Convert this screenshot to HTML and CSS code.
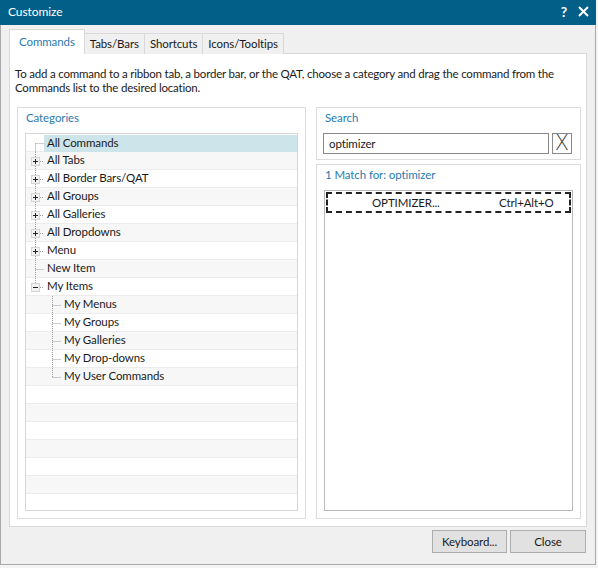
FILE: index.html
```html
<!DOCTYPE html>
<html lang="en">
<head>
  <meta charset="UTF-8" />
  <title>Customize</title>
  <link rel="stylesheet" href="styles.css">
</head>
<body>
  <svg class="defs" width="0" height="0">
    <symbol id="t-first" viewBox="0 0 18 18">
      <path d="M9.5 9.5V18M9.5 9.5H18" class="dots" />
    </symbol>
    <symbol id="t-mid" viewBox="0 0 18 18">
      <path d="M9.5 0V18M9.5 9.5H18" class="dots" />
    </symbol>
    <symbol id="t-plus" viewBox="0 0 18 18">
      <path d="M9.5 0V5M9.5 14V18M14 9.5H18" class="dots" />
      <rect x="5.5" y="5.5" width="8" height="8" class="box" />
      <path d="M7 9.5H12M9.5 7V12" class="sign" />
    </symbol>
    <symbol id="t-minus" viewBox="0 0 18 18">
      <path d="M9.5 0V5M14 9.5H18" class="dots" />
      <rect x="5.5" y="5.5" width="8" height="8" class="box" />
      <path d="M7 9.5H12" class="sign" />
    </symbol>
    <symbol id="t-child" viewBox="0 0 35 18">
      <path d="M26.5 0V18M26.5 9.5H35" class="dots" />
    </symbol>
    <symbol id="t-child-last" viewBox="0 0 35 18">
      <path d="M26.5 0V9.5M26.5 9.5H35" class="dots" />
    </symbol>
  </svg>

  <div class="dialog">
    <div class="titlebar">
      <span class="title">Customize</span>
      <span class="help">?</span>
      <svg class="close-x" width="11" height="11" viewBox="0 0 11 11">
        <path d="M1 1L10 10M10 1L1 10" />
      </svg>
    </div>

    <div class="content">
      <div class="tabs">
        <div class="tab active">Commands</div>
        <div class="tab">Tabs/Bars</div>
        <div class="tab">Shortcuts</div>
        <div class="tab">Icons/Tooltips</div>
      </div>

      <div class="page">
        <p class="intro">To add a command to a ribbon tab, a border bar, or the QAT, choose a category and drag the command from the<br>Commands list to the desired location.</p>

        <div class="columns">
          <div class="group categories">
            <div class="group-title">Categories</div>
            <div class="tree">
              <div class="row"><svg class="gut"><use href="#t-first" /></svg><span class="label selected">All Commands</span></div>
              <div class="row"><svg class="gut"><use href="#t-plus" /></svg><span class="label">All Tabs</span></div>
              <div class="row"><svg class="gut"><use href="#t-plus" /></svg><span class="label">All Border Bars/QAT</span></div>
              <div class="row"><svg class="gut"><use href="#t-plus" /></svg><span class="label">All Groups</span></div>
              <div class="row"><svg class="gut"><use href="#t-plus" /></svg><span class="label">All Galleries</span></div>
              <div class="row"><svg class="gut"><use href="#t-plus" /></svg><span class="label">All Dropdowns</span></div>
              <div class="row"><svg class="gut"><use href="#t-plus" /></svg><span class="label">Menu</span></div>
              <div class="row"><svg class="gut"><use href="#t-mid" /></svg><span class="label">New Item</span></div>
              <div class="row"><svg class="gut"><use href="#t-minus" /></svg><span class="label">My Items</span></div>
              <div class="row"><svg class="gut wide"><use href="#t-child" /></svg><span class="label">My Menus</span></div>
              <div class="row"><svg class="gut wide"><use href="#t-child" /></svg><span class="label">My Groups</span></div>
              <div class="row"><svg class="gut wide"><use href="#t-child" /></svg><span class="label">My Galleries</span></div>
              <div class="row"><svg class="gut wide"><use href="#t-child" /></svg><span class="label">My Drop-downs</span></div>
              <div class="row"><svg class="gut wide"><use href="#t-child-last" /></svg><span class="label">My User Commands</span></div>
              <div class="row"></div>
              <div class="row"></div>
              <div class="row"></div>
              <div class="row"></div>
              <div class="row"></div>
              <div class="row"></div>
              <div class="row"></div>
            </div>
          </div>

          <div class="side">
            <div class="group search">
              <div class="group-title">Search</div>
              <div class="search-row">
                <div class="search-input">optimizer</div>
                <div class="clear-btn">X</div>
              </div>
            </div>

            <div class="group matches">
              <div class="group-title">1 Match for: optimizer</div>
              <div class="match-list">
                <div class="match focused">
                  <span class="cmd">OPTIMIZER...</span>
                  <span class="keys">Ctrl+Alt+O</span>
                </div>
              </div>
            </div>
          </div>
        </div>
      </div>

      <div class="footer">
        <button class="btn">Keyboard...</button>
        <button class="btn">Close</button>
      </div>
    </div>
  </div>
</body>
</html>
```

FILE: styles.css
```css
* {
  box-sizing: border-box;
}

body {
  margin: 0;
  background: #f4f4f4;
  font-family: Lato, "Noto Sans", sans-serif;
  font-size: 11.5px;
  letter-spacing: -0.1px;
  color: #1a1a1a;
}

.defs {
  position: absolute;
}

.dots {
  fill: none;
  stroke: #9c9c9c;
  stroke-width: 1;
  stroke-dasharray: 1 1;
}

.box {
  fill: #f2f2f2;
  stroke: #d4d4d4;
}

.sign {
  fill: none;
  stroke: #222;
  stroke-width: 1;
}

.dialog {
  width: 596px;
  height: 565px;
  display: flex;
  flex-direction: column;
  background: #f0f0f0;
}

.titlebar {
  height: 25px;
  flex: none;
  background: #015f88;
  color: #fff;
  display: flex;
  align-items: center;
  padding: 0 7px 2px 8px;
  font-size: 12px;
}

.title {
  flex: 1;
}

.help {
  font-weight: bold;
  font-size: 14px;
  margin-right: 11px;
}

.close-x path {
  stroke: #fff;
  stroke-width: 2;
}

.content {
  flex: 1;
  border: 1px solid #a9a9a9;
  border-top: none;
  display: flex;
  flex-direction: column;
}

.tabs {
  display: flex;
  align-items: flex-end;
  margin: 4px 0 -1px 8px;
  height: 25px;
  position: relative;
  z-index: 1;
}

.tab {
  height: 21px;
  line-height: 19px;
  padding: 0 5px;
  border: 1px solid #d9d9d9;
  border-bottom: none;
  background: #f0f0f0;
  margin-left: -1px;
}

.tab:first-child {
  margin-left: 0;
}

.tab.active {
  height: 25px;
  line-height: 23px;
  background: #fff;
  color: #2a7bb0;
  padding: 0 9px;
}

.page {
  margin-left: 8px;
  width: 578px;
  height: 474px;
  flex: none;
  background: #fff;
  border: 1px solid #d9d9d9;
  padding: 13px 0 0 5px;
}

.intro {
  margin: 0;
  line-height: 14px;
  letter-spacing: -0.2px;
  white-space: nowrap;
}

.columns {
  display: grid;
  grid-template-columns: 289px 265px;
  gap: 10px;
  margin: 12px 0 0 2px;
}

.group {
  border: 1px solid #dcdcdc;
  background: #fff;
}

.group-title {
  color: #2a7bb0;
  line-height: 14px;
  padding: 3px 0 0 8px;
}

.categories {
  height: 412px;
}

.tree {
  margin: 8px 0 0 7px;
  width: 273px;
  height: 378px;
  border: 1px solid #d6d6d6;
  overflow: hidden;
}

.row {
  height: 18px;
  display: flex;
  border-bottom: 1px solid #ececec;
}

.row:nth-child(even) {
  background: #f7f7f7;
}

.gut {
  width: 18px;
  height: 18px;
  flex: none;
}

.gut.wide {
  width: 35px;
}

.label {
  flex: 1;
  padding-left: 3px;
  line-height: 16px;
}

.label.selected {
  background: #cde4ea;
  margin-top: 1px;
  margin-bottom: -1px;
}

.side {
  display: flex;
  flex-direction: column;
  gap: 4px;
}

.search {
  height: 53px;
}

.search-row {
  display: flex;
  gap: 3px;
  margin: 8px 0 0 6px;
}

.search-input {
  width: 226px;
  height: 21px;
  border: 1px solid #8a8a8a;
  padding-left: 5px;
  line-height: 19px;
}

.clear-btn {
  width: 20px;
  height: 21px;
  border: 1px solid #8a8a8a;
  text-align: center;
  font-family: "DejaVu Sans", sans-serif;
  font-weight: 200;
  font-size: 21px;
  line-height: 19px;
  letter-spacing: 0;
  color: #444;
}

.matches {
  height: 355px;
}

.match-list {
  margin: 8px 0 0 7px;
  width: 249px;
  height: 321px;
  border: 1px solid #b8b8b8;
  padding: 1px;
}

.match {
  height: 21px;
  display: flex;
  align-items: center;
  border: 2px dashed #222;
  padding-left: 44px;
}

.cmd {
  width: 127px;
}

.footer {
  display: flex;
  justify-content: flex-end;
  gap: 3px;
  padding: 3px 9px 0 0;
}

.btn {
  height: 23px;
  width: 75px;
  font: inherit;
  letter-spacing: inherit;
  color: #1a1a1a;
  background: #e1e1e1;
  border: 1px solid #adadad;
  padding: 0;
}

.btn + .btn {
  width: 76px;
}
```
